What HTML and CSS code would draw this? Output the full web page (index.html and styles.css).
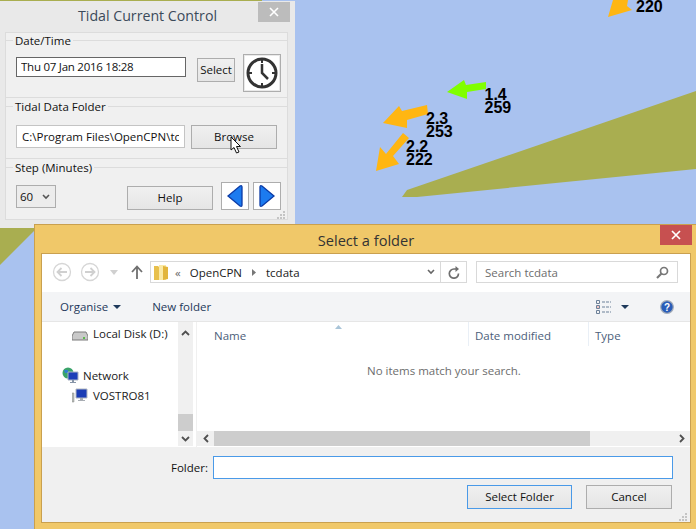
FILE: index.html
```html
<!DOCTYPE html>
<html>
  <head>
    <title>Tidal Current Control</title>
    <link rel="stylesheet" href="styles.css">
  </head>
  <body>
    <div class="desktop">
      <svg class="chart" width="696" height="529" viewBox="0 0 696 529">
        <polygon class="land" points="0,0 262,0 262,40 0,40"/>
        <polygon class="land" points="0,225 40,225 0,265"/>
        <polygon class="land" points="402,197 407,190 696,91 696,169 417,197"/>
        <polygon class="fast" points="608,17 613,0 628,0 627,6 632,10"/>
        <polygon class="slow" points="447,92 464,80 466,85 486,82 486,89 467,92 467,99"/>
        <polygon class="fast" points="383,123 399,106 402,111 427,105 428,114 407,120 407,128"/>
        <polygon class="fast" points="376,171 380,147 386,154 403,133 409,138 393,156 399,164"/>
        <text class="rate" x="636" y="12">220</text>
        <text class="rate" x="484.500" y="100">1.4</text>
        <text class="rate" x="484.500" y="113">259</text>
        <text class="rate" x="426" y="124">2.3</text>
        <text class="rate" x="426" y="137">253</text>
        <text class="rate" x="406" y="152">2.2</text>
        <text class="rate" x="406" y="165">222</text>
      </svg>

      <div class="control">
        <div class="control-title">Tidal Current Control</div>
        <span class="control-close">
          <svg width="10" height="10" viewBox="0 0 10 10"><path d="M1 1L9 9M9 1L1 9" stroke="#fff" stroke-width="1.6"/></svg>
        </span>
        <div class="control-panel">
          <fieldset class="group group-date">
            <legend>Date/Time</legend>
            <input class="text-input date-input" type="text" value="Thu 07 Jan 2016 18:28">
            <button class="btn select-btn">Select</button>
            <button class="btn icon-btn clock-btn">
              <svg width="34" height="34" viewBox="0 0 34 34">
                <rect width="34" height="34" fill="#fff"/>
                <circle cx="17" cy="17" r="14" fill="none" stroke="#333" stroke-width="3"/>
                <path d="M17 3v4M17 27v4M3 17h4M27 17h4" stroke="#333" stroke-width="2"/>
                <path d="M17 8v9l6 6" fill="none" stroke="#333" stroke-width="2.5"/>
              </svg>
            </button>
          </fieldset>
          <fieldset class="group group-folder">
            <legend>Tidal Data Folder</legend>
            <input class="text-input folder-input" type="text" value="C:\Program Files\OpenCPN\tcdata">
            <button class="btn browse-btn">Browse</button>
          </fieldset>
          <fieldset class="group group-step">
            <legend>Step (Minutes)</legend>
            <div class="step-select">
              <span>60</span>
              <svg width="8" height="6" viewBox="0 0 8 6"><path d="M1 1l3 3 3-3" fill="none" stroke="#555" stroke-width="1.6"/></svg>
            </div>
            <button class="btn help-btn">Help</button>
            <button class="btn icon-btn arrow-btn">
              <svg width="26" height="26" viewBox="0 0 26 26">
                <rect width="26" height="26" fill="#fff"/>
                <path d="M6 13L18 3Q20 2 20 4V22Q20 24 18 23Z" fill="#1c7bf0" stroke="#0b3aa5" stroke-width="1.3"/>
              </svg>
            </button>
            <button class="btn icon-btn arrow-btn">
              <svg width="26" height="26" viewBox="0 0 26 26">
                <rect width="26" height="26" fill="#fff"/>
                <path d="M20 13L8 3Q6 2 6 4V22Q6 24 8 23Z" fill="#1c7bf0" stroke="#0b3aa5" stroke-width="1.3"/>
              </svg>
            </button>
          </fieldset>
        </div>
        <svg class="grip" width="9" height="9" viewBox="0 0 9 9">
          <path d="M6 0h2v2H6zM3 3h2v2H3zM6 3h2v2H6zM0 6h2v2H0zM3 6h2v2H3zM6 6h2v2H6z" fill="#c4c4c4"/>
        </svg>
        <svg class="cursor" width="14" height="19" viewBox="0 0 14 19">
          <path d="M1 1V14L4 11.500L6.500 17L9 16L6.500 10.500H10.500Z" fill="#fff" stroke="#111"/>
        </svg>
      </div>

      <div class="dialog">
        <div class="dialog-title">Select a folder</div>
        <span class="dialog-close">
          <svg width="10" height="10" viewBox="0 0 10 10"><path d="M1 1L9 9M9 1L1 9" stroke="#fff" stroke-width="1.7"/></svg>
        </span>
        <div class="client">
          <div class="nav-bar">
            <svg class="nav-round" width="20" height="20" viewBox="0 0 20 20">
              <circle cx="10" cy="10" r="8.500" fill="none" stroke="#d6d6d6" stroke-width="1.300"/>
              <path d="M15 10H6M9.500 6L5.500 10L9.500 14" fill="none" stroke="#d0d0d0" stroke-width="1.800"/>
            </svg>
            <svg class="nav-round" width="20" height="20" viewBox="0 0 20 20">
              <circle cx="10" cy="10" r="8.500" fill="none" stroke="#d6d6d6" stroke-width="1.300"/>
              <path d="M5 10H14M10.500 6L14.500 10L10.500 14" fill="none" stroke="#d0d0d0" stroke-width="1.800"/>
            </svg>
            <svg class="nav-drop" width="8" height="5" viewBox="0 0 8 5"><path d="M0 0H8L4 5Z" fill="#d0d0d0"/></svg>
            <svg class="nav-up" width="12" height="14" viewBox="0 0 12 14"><path d="M6 14V2M1 7L6 1.500L11 7" fill="none" stroke="#6f6f6f" stroke-width="1.800"/></svg>
            <div class="address">
              <svg class="folder-icon" width="14" height="17" viewBox="0 0 14 17">
                <path d="M0 2H4L5 3V16H0Z" fill="#e8c04c"/>
                <path d="M5 1H12V16H5Z" fill="#fbe9a4"/>
                <path d="M9 2L14 3V15L9 16Z" fill="#e2b53c"/>
              </svg>
              <span class="crumb-more">&laquo;</span>
              <span class="crumb">OpenCPN</span>
              <svg class="crumb-sep" width="4" height="7" viewBox="0 0 4 7"><path d="M0 0L4 3.500L0 7Z" fill="#777"/></svg>
              <span class="crumb">tcdata</span>
              <svg class="address-chev" width="8" height="6" viewBox="0 0 8 6"><path d="M1 1l3 3 3-3" fill="none" stroke="#666" stroke-width="1.600"/></svg>
              <span class="refresh">
                <svg width="12" height="13" viewBox="0 0 12 13"><path d="M10.500 7.500A4.600 4.600 0 1 1 6 3H8" fill="none" stroke="#6f6f6f" stroke-width="1.700"/><path d="M7.500 0L11 3L7.500 6Z" fill="#6f6f6f"/></svg>
              </span>
            </div>
            <div class="search">
              <span>Search tcdata</span>
              <svg width="13" height="13" viewBox="0 0 13 13"><circle cx="8" cy="5" r="3.500" fill="none" stroke="#777" stroke-width="1.700"/><path d="M5.500 7.500L1 12" stroke="#777" stroke-width="2.200"/></svg>
            </div>
          </div>

          <div class="tool-bar">
            <span class="tool organise">Organise</span>
            <svg class="tool-caret" width="8" height="4" viewBox="0 0 8 4"><path d="M0 0H8L4 4Z" fill="#1e395b"/></svg>
            <span class="tool new-folder">New folder</span>
            <svg class="view-icon" width="16" height="14" viewBox="0 0 16 14">
              <path d="M.5.5h3v3h-3zM.5 5.500h3v3h-3zM.5 10.500h3v3h-3z" fill="none" stroke="#6d8199"/>
              <path d="M6 2h9M6 7h9M6 12h9" stroke="#6d8199" stroke-dasharray="3 1"/>
              <path d="M1.500 6.500h1v1h-1z" fill="#d33"/>
            </svg>
            <svg class="view-caret" width="8" height="4" viewBox="0 0 8 4"><path d="M0 0H8L4 4Z" fill="#1e395b"/></svg>
            <svg class="help-icon" width="14" height="14" viewBox="0 0 14 14">
              <circle cx="7" cy="7" r="6.300" fill="#2a5db8" stroke="#a4acb8" stroke-width="1.200"/>
              <text x="7" y="11" class="help-mark">?</text>
            </svg>
          </div>

          <div class="browser">
            <div class="nav-pane">
              <div class="tree-row tree-disk">
                <svg width="16" height="10" viewBox="0 0 16 10">
                  <path d="M2 1H14L16 5V9H0V5Z" fill="#c9c9c9" stroke="#7b7b7b"/>
                  <path d="M11 6h2v2h-2z" fill="#5dbb4e"/>
                </svg>
                <span>Local Disk (D:)</span>
              </div>
              <div class="tree-row tree-network">
                <svg width="17" height="16" viewBox="0 0 17 16">
                  <circle cx="6" cy="6" r="5.500" fill="#3aa36a"/>
                  <path d="M2 3h4v3H3z" fill="#2f7fd0"/>
                  <path d="M6 5H16V13H6Z" fill="#1c3fb8" stroke="#a9b4c4"/>
                  <path d="M10 13h2v2h2v1H8v-1h2z" fill="#8795a8"/>
                </svg>
                <span>Network</span>
              </div>
              <div class="tree-row tree-pc">
                <svg width="16" height="15" viewBox="0 0 16 15">
                  <path d="M0 5h2v9H0z" fill="#b9bfb9" stroke="#8a8a8a" stroke-width=".5"/>
                  <path d="M4 1H15V10H4Z" fill="#1b3db5" stroke="#b2b8c0"/>
                  <path d="M8 10h3v2h2v1H6v-1h2z" fill="#a8adb3"/>
                </svg>
                <span>VOSTRO81</span>
              </div>
            </div>
            <div class="vscroll">
              <svg class="scroll-up" width="9" height="6" viewBox="0 0 9 6"><path d="M1 5l3.500-3.500L8 5" fill="none" stroke="#505050" stroke-width="1.800"/></svg>
              <div class="vscroll-thumb"></div>
              <svg class="scroll-down" width="9" height="6" viewBox="0 0 9 6"><path d="M1 1l3.500 3.500L8 1" fill="none" stroke="#505050" stroke-width="1.800"/></svg>
            </div>
            <div class="files">
              <div class="columns">
                <span class="col col-name">Name</span>
                <span class="col col-date">Date modified</span>
                <span class="col col-type">Type</span>
                <svg class="sort-mark" width="7" height="4" viewBox="0 0 7 4"><path d="M0 4L3.500 0L7 4Z" fill="#a9c4d8"/></svg>
              </div>
              <div class="empty">No items match your search.</div>
              <div class="hscroll">
                <span class="hscroll-btn">
                  <svg width="6" height="9" viewBox="0 0 6 9"><path d="M5 1L1.500 4.500L5 8" fill="none" stroke="#505050" stroke-width="1.800"/></svg>
                </span>
                <div class="hscroll-thumb"></div>
                <span class="hscroll-btn hscroll-end">
                  <svg width="6" height="9" viewBox="0 0 6 9"><path d="M1 1L4.500 4.500L1 8" fill="none" stroke="#505050" stroke-width="1.800"/></svg>
                </span>
              </div>
            </div>
          </div>

          <div class="footer">
            <div class="folder-row">
              <label class="folder-label">Folder:</label>
              <input class="folder-name" type="text">
            </div>
            <div class="button-row">
              <button class="btn dlg-btn default-btn">Select Folder</button>
              <button class="btn dlg-btn">Cancel</button>
            </div>
            <svg class="grip dialog-grip" width="9" height="9" viewBox="0 0 9 9">
              <path d="M6 0h2v2H6zM3 3h2v2H3zM6 3h2v2H6zM0 6h2v2H0zM3 6h2v2H3zM6 6h2v2H6z" fill="#c4c4c4"/>
            </svg>
          </div>
        </div>
      </div>
    </div>
  </body>
</html>
```

FILE: styles.css
```css
* {
  box-sizing: border-box;
}
body {
  margin: 0;
  font-family: "Open Sans", "Noto Sans", sans-serif;
  font-size: 11.5px;
  color: #111;
}
.desktop {
  position: relative;
  width: 696px;
  height: 529px;
  overflow: hidden;
  background-color: #a9c2ef;
}
.chart {
  position: absolute;
  left: 0;
  top: 0;
}
.land {
  fill: #a9ae50;
}
.fast {
  fill: #ffb612;
}
.slow {
  fill: #80ff00;
}
.rate {
  font-family: "Liberation Sans", sans-serif;
  font-weight: bold;
  font-size: 16px;
  fill: #000;
}

/* tidal control window */
.control {
  position: absolute;
  left: 0;
  top: 1px;
  width: 295px;
  height: 227px;
  padding: 31px 7px 0 5px;
  background-color: #e9e9e9;
}
.control-title {
  position: absolute;
  left: 0;
  top: 5px;
  width: 295px;
  text-align: center;
  font-size: 14.200px;
  color: #3b4a5a;
}
.control-close {
  position: absolute;
  left: 258px;
  top: 1px;
  width: 32px;
  height: 20px;
  display: flex;
  align-items: center;
  justify-content: center;
  background-color: #bcbcbc;
}
.control-panel {
  height: 188px;
  border: 1px solid #dcdcdc;
  background-color: #f0f0f0;
  display: flex;
  flex-direction: column;
  gap: 1px;
}
.group {
  margin: 0;
  padding: 0;
  border: 1px solid #dcdcdc;
  border-left: 0;
  border-right: 0;
  min-width: 0;
  flex: none;
  display: flex;
  align-items: flex-start;
}
.group legend {
  margin-left: 7px;
  padding: 0 2px;
  height: 14px;
  line-height: 16px;
}
.group-date {
  height: 65px;
}
.group-folder {
  height: 60px;
}
.group-step {
  height: 59px;
  border-bottom: 0;
}
.text-input {
  height: 20px;
  padding: 0 4px;
  background-color: #fff;
  font: inherit;
  color: #111;
  outline: none;
}
.date-input {
  width: 170px;
  margin: 10px 0 0 10px;
  padding-bottom: 2px;
  border: 1px solid #666;
  letter-spacing: -0.25px;
}
.folder-input {
  width: 169px;
  height: 23px;
  margin: 12px 0 0 10px;
  padding: 0 5px;
  border: 1px solid #c4c4c4;
}
.btn {
  padding: 0 0 2px;
  border: 1px solid #adadad;
  background: linear-gradient(#f0f0f0, #e5e5e5);
  font: inherit;
  color: #111;
  display: flex;
  align-items: center;
  justify-content: center;
}
.select-btn {
  width: 38px;
  height: 24px;
  margin: 11px 0 0 11px;
}
.icon-btn {
  padding: 0;
  background: #e9e9e9;
}
.clock-btn {
  width: 38px;
  height: 38px;
  margin: 7px 0 0 8px;
}
.browse-btn {
  width: 86px;
  height: 24px;
  margin: 12px 0 0 6px;
}
.step-select {
  width: 40px;
  height: 23px;
  margin: 11px 0 0 10px;
  padding: 0 5px 0 3px;
  border: 1px solid #adadad;
  background-color: #ececec;
  display: flex;
  align-items: center;
  justify-content: space-between;
}
.help-btn {
  width: 86px;
  height: 24px;
  margin: 12px 0 0 71px;
}
.arrow-btn {
  width: 28px;
  height: 28px;
  margin: 8px 0 0 8px;
}
.arrow-btn + .arrow-btn {
  margin-left: 4px;
}
.grip {
  position: absolute;
  right: 9px;
  top: 210px;
}
.cursor {
  position: absolute;
  left: 230px;
  top: 135px;
}

/* folder picker dialog */
.dialog {
  position: absolute;
  left: 34px;
  top: 224px;
  width: 662px;
  height: 305px;
  padding: 28px 5px 6px 6px;
  border-left: 1px solid #c9a04f;
  border-top: 1px solid #c9a04f;
  background-color: #f0c869;
}
.dialog-title {
  position: absolute;
  left: 0;
  top: 5px;
  width: 662px;
  text-align: center;
  font-size: 14.600px;
  color: #333;
}
.dialog-close {
  position: absolute;
  left: 625px;
  top: 0;
  width: 32px;
  height: 20px;
  display: flex;
  align-items: center;
  justify-content: center;
  background-color: #c75050;
}
.client {
  height: 270px;
  border: 1px solid #c9a04f;
  background-color: #fff;
  display: flex;
  flex-direction: column;
}
.nav-bar {
  height: 38px;
  flex: none;
  padding: 7px 12px 0 10px;
  display: flex;
  align-items: flex-start;
}
.nav-round {
  margin: 1px 8px 0 0;
}
.nav-round + .nav-drop {
  margin: 9px 0 0 2px;
}
.nav-up {
  margin: 4px 0 0 13px;
}
.address {
  width: 317px;
  height: 22px;
  margin-left: 7px;
  padding-left: 3px;
  border: 1px solid #d9d9d9;
  display: flex;
  align-items: center;
}
.crumb-more {
  margin: 0 9px 0 7px;
  color: #666;
}
.crumb {
  color: #1a1a1a;
}
.crumb-sep {
  margin: 0 10px;
}
.address-chev {
  margin-left: auto;
  margin-right: 5px;
}
.refresh {
  width: 26px;
  height: 100%;
  border-left: 1px solid #d9d9d9;
  display: flex;
  align-items: center;
  justify-content: center;
}
.search {
  width: 202px;
  height: 22px;
  margin-left: 9px;
  padding: 0 8px;
  border: 1px solid #d9d9d9;
  color: #6d6d6d;
  display: flex;
  align-items: center;
  justify-content: space-between;
}
.tool-bar {
  height: 30px;
  flex: none;
  border-bottom: 1px solid #e6e6e6;
  background-color: #f3f4f6;
  display: flex;
  align-items: center;
  color: #1e395b;
}
.organise {
  margin-left: 18px;
}
.tool-caret {
  margin-left: 5px;
}
.new-folder {
  margin-left: 31px;
}
.view-icon {
  margin-left: auto;
}
.view-caret {
  margin-left: 9px;
}
.help-icon {
  margin: 0 16px 0 31px;
}
.help-mark {
  font-family: "Liberation Sans", sans-serif;
  font-weight: bold;
  font-size: 10px;
  fill: #fff;
  text-anchor: middle;
}
.browser {
  height: 125px;
  flex: none;
  display: flex;
}
.nav-pane {
  width: 136px;
  flex: none;
  padding-top: 1px;
}
.tree-row {
  height: 20px;
  display: flex;
  align-items: center;
  color: #1a1a1a;
}
.tree-disk {
  padding-left: 30px;
  gap: 5px;
}
.tree-disk svg {
  margin-top: 6px;
}
.tree-network {
  margin-top: 22px;
  padding-left: 20px;
  gap: 4px;
}
.tree-pc {
  padding-left: 30px;
  gap: 5px;
}
.vscroll {
  width: 15px;
  flex: none;
  margin-bottom: 1px;
  background-color: #f0f0f0;
  display: flex;
  flex-direction: column;
  align-items: center;
}
.scroll-up {
  margin-top: 8px;
}
.vscroll-thumb {
  width: 15px;
  height: 17px;
  margin-top: auto;
  background-color: #cdcdcd;
}
.scroll-down {
  margin: 5px 0 4px;
}
.files {
  flex: 1;
  margin-left: 3px;
  border-left: 1px solid #f0f0f0;
  display: flex;
  flex-direction: column;
}
.columns {
  height: 24px;
  position: relative;
  display: flex;
  flex: none;
  color: #4c607a;
  line-height: 27px;
}
.col {
  border-right: 1px solid #e9eff6;
}
.col-name {
  width: 272px;
  padding-left: 17px;
}
.col-date {
  width: 120px;
  padding-left: 6px;
}
.col-type {
  flex: 1;
  border-right: 0;
  padding-left: 6px;
}
.sort-mark {
  position: absolute;
  left: 138px;
  top: 3px;
}
.empty {
  flex: 1;
  padding-top: 17px;
  padding-left: 170px;
  color: #6d6d6d;
}
.hscroll {
  height: 15px;
  flex: none;
  margin-bottom: 1px;
  background-color: #f0f0f0;
  display: flex;
}
.hscroll-btn {
  width: 17px;
  display: flex;
  align-items: center;
  justify-content: center;
}
.hscroll-thumb {
  width: 376px;
  background-color: #cdcdcd;
}
.hscroll-end {
  margin-left: auto;
  width: 16px;
}
.footer {
  flex: 1;
  position: relative;
  background-color: #f0f0f0;
  padding-top: 9px;
}
.folder-row {
  display: flex;
  align-items: center;
  justify-content: flex-end;
  padding-right: 17px;
  gap: 5px;
}
.folder-name {
  width: 460px;
  height: 23px;
  border: 1px solid #4a9ae8;
  outline: none;
  background-color: #fff;
}
.button-row {
  display: flex;
  justify-content: flex-end;
  gap: 14px;
  padding-right: 18px;
  margin-top: 6px;
}
.dlg-btn {
  width: 86px;
  height: 24px;
}
.default-btn {
  width: 105px;
  border-color: #4a9ae8;
}
.dialog-grip {
  top: auto;
  right: 2px;
  bottom: 0;
}
```
